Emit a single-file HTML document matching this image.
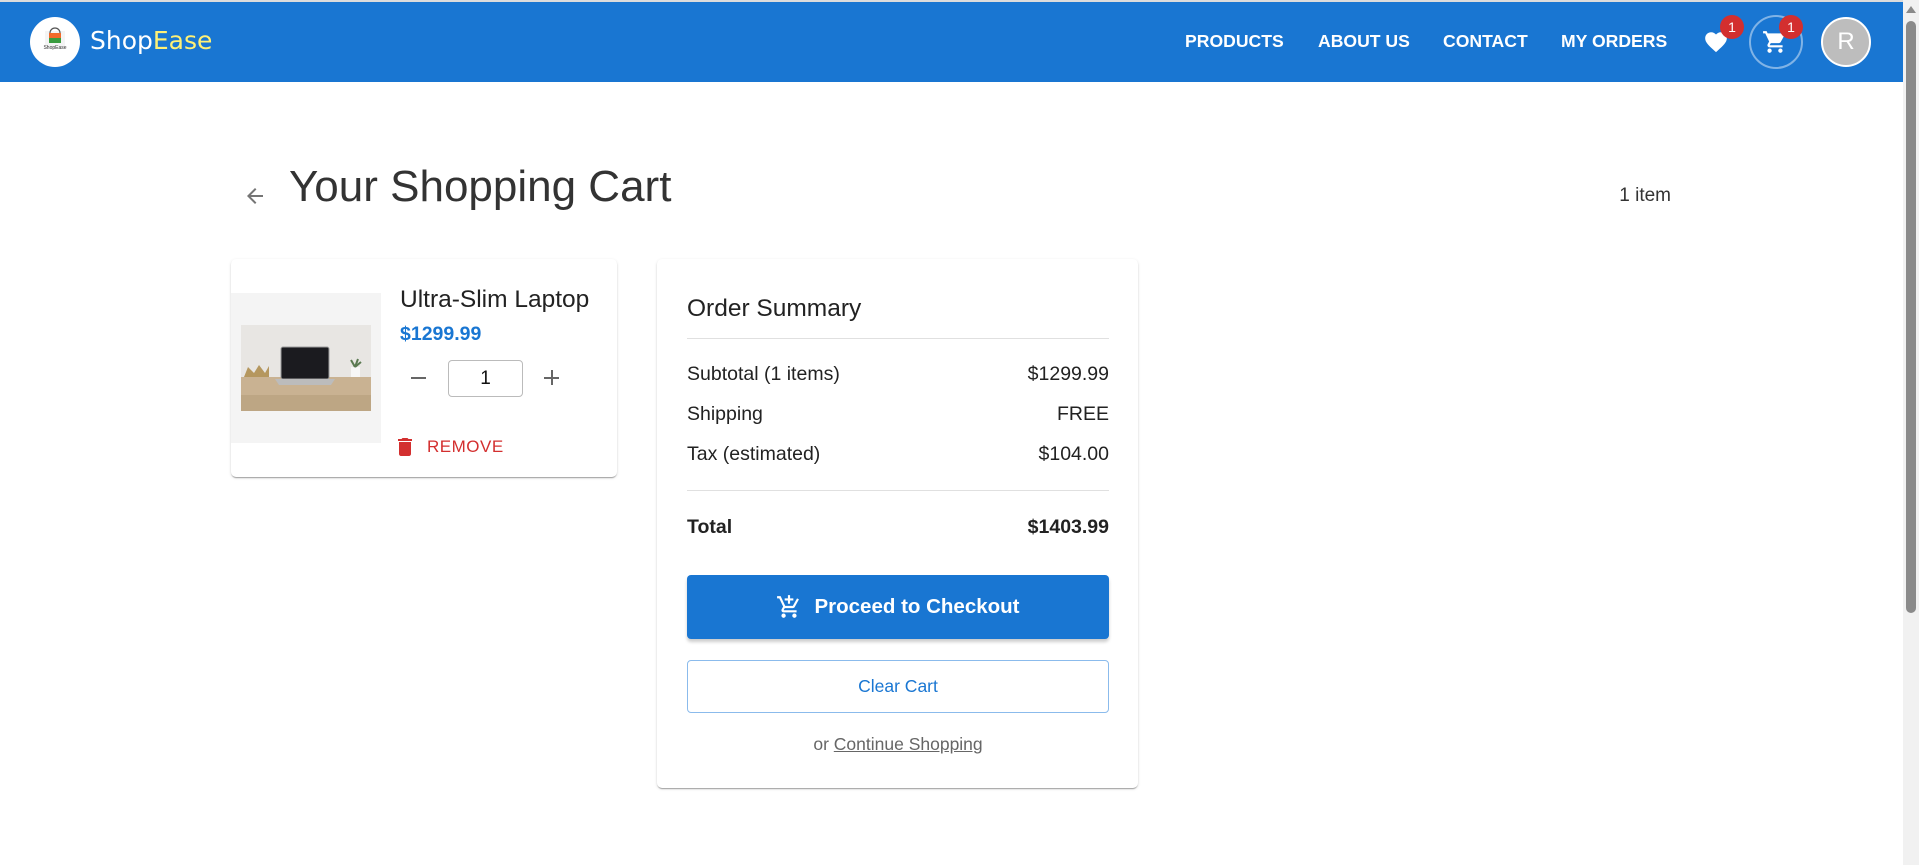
<!DOCTYPE html>
<html><head><meta charset="utf-8"><style>
*{box-sizing:border-box;margin:0;padding:0}
body{width:1919px;height:865px;overflow:hidden;background:#fff;font-family:"Liberation Sans",Arial,sans-serif;position:relative;color:#222}
.a{position:absolute}
.nav{left:0;top:2px;width:1903px;height:80px;background:#1976d2}
.top{left:0;top:0;width:1919px;height:2px;background:#dcdcdc}
.link{top:31px;color:#fff;font-weight:bold;font-size:17.6px;letter-spacing:0}
.badge{width:24px;height:24px;border-radius:50%;background:#d32f2f;color:#fff;font-size:14px;text-align:center;line-height:24px}
.card{background:#fff;border-radius:5px;box-shadow:0 2px 1px -1px rgba(0,0,0,.2),0 1px 1px rgba(0,0,0,.14),0 1px 3px rgba(0,0,0,.12)}
.row{left:687px;width:422px;font-size:19.5px;display:flex;justify-content:space-between}
</style></head><body>
<div class="a top"></div>
<div class="a nav"></div>
<div class="a" style="left:30px;top:17px;width:50px;height:50px;border-radius:50%;background:#fff"></div>
<svg class="a" style="left:41px;top:25px" width="28" height="30" viewBox="0 0 28 30"><rect x="4" y="6" width="20" height="18" fill="#f4f4f4"/><path d="M9 8a5 5 0 0 1 10 0" stroke="#555" fill="none" stroke-width="1.2"/><rect x="8" y="8" width="12" height="5" fill="#f26a2a"/><rect x="8" y="13" width="12" height="5" fill="#3a9c3f"/><text x="14" y="24" font-size="5" text-anchor="middle" fill="#333" font-family="Liberation Sans">ShopEase</text></svg>
<div class="a" style="left:90px;top:26px;font-family:'Comic Sans MS','DejaVu Sans',sans-serif;font-size:25px;color:#fff">Shop<span style="color:#fff176">Ease</span></div>
<div class="a link" style="left:1185px">PRODUCTS</div>
<div class="a link" style="left:1318px">ABOUT US</div>
<div class="a link" style="left:1443px">CONTACT</div>
<div class="a link" style="left:1561px">MY ORDERS</div>
<svg class="a" style="left:1703px;top:29px" width="26" height="26" viewBox="0 0 24 24"><path fill="#fff" d="M12 21.35l-1.45-1.32C5.4 15.36 2 12.28 2 8.5 2 5.42 4.42 3 7.5 3c1.74 0 3.41.81 4.5 2.09C13.09 3.81 14.76 3 16.5 3 19.58 3 22 5.42 22 8.5c0 3.78-3.4 6.86-8.55 11.54z"/></svg>
<div class="a badge" style="left:1720px;top:15px">1</div>
<div class="a" style="left:1749px;top:15px;width:54px;height:54px;border-radius:50%;border:2px solid rgba(255,255,255,.45)"></div>
<svg class="a" style="left:1762px;top:29px" width="26" height="26" viewBox="0 0 24 24"><path fill="#fff" d="M7 18c-1.1 0-2 .9-2 2s.9 2 2 2 2-.9 2-2-.9-2-2-2M1 2v2h2l3.6 7.59-1.35 2.45c-.16.28-.25.61-.25.96 0 1.1.9 2 2 2h12v-2H7.42c-.14 0-.25-.11-.25-.25l.03-.12.9-1.630h7.45c.75 0 1.41-.41 1.750-1.030l3.58-6.49A1 1 0 0 0 20 4H5.21l-.94-2zm16 16c-1.1 0-2 .9-2 2s.9 2 2 2 2-.9 2-2-.9-2-2-2"/></svg>
<div class="a badge" style="left:1779px;top:15px">1</div>
<div class="a" style="left:1821px;top:17px;width:50px;height:50px;border-radius:50%;background:#bdbdbd;border:2px solid #fff;color:#fff;font-size:24px;text-align:center;line-height:46px">R</div>
<div class="a" style="left:1903px;top:0;width:16px;height:865px;background:#f1f1f1"></div>
<div class="a" style="left:1906px;top:21px;width:10px;height:592px;background:#8a8a8a;border-radius:5px"></div>
<div class="a" style="left:1906px;top:6px;width:0;height:0;border-left:5px solid transparent;border-right:5px solid transparent;border-bottom:7px solid #8a8a8a"></div>

<svg class="a" style="left:243px;top:184px" width="24" height="24" viewBox="0 0 24 24"><path fill="#757575" d="M20 11H7.83l5.59-5.59L12 4l-8 8 8 8 1.41-1.41L7.83 13H20z"/></svg>
<div class="a" style="left:289px;top:162px;font-size:44px;color:#333">Your Shopping Cart</div>
<div class="a" style="left:1600px;top:185px;width:71px;text-align:right;font-size:19px;color:#333">1 item</div>

<div class="a card" style="left:231px;top:259px;width:386px;height:218px"></div>
<div class="a" style="left:231px;top:293px;width:150px;height:150px;background:#f4f4f4"></div>
<svg class="a" style="left:241px;top:325px" width="130" height="86" viewBox="0 0 130 86"><rect width="130" height="86" fill="#e8e6e3"/><rect y="52" width="130" height="34" fill="#c9b292"/><rect y="70" width="130" height="16" fill="#bda684"/><path d="M3 52l4-10 6 6 5-8 6 8 4-7v11z" fill="#b5975e"/><rect x="110" y="42" width="9" height="10" fill="#f7f7f7"/><path d="M114 42l-4-7M114 42l3-8M114 42l6-5" stroke="#5b7a52" stroke-width="2"/><rect x="40" y="22" width="48" height="32" rx="2" fill="#1b1b1f" stroke="#9c9c9c"/><path d="M34 54h60l-4 6H38z" fill="#bcbcbc"/></svg>
<div class="a" style="left:400px;top:286px;font-size:24.5px;color:#222">Ultra-Slim Laptop</div>
<div class="a" style="left:400px;top:323px;font-size:19.5px;font-weight:bold;color:#1976d2">$1299.99</div>
<div class="a" style="left:411px;top:377px;width:15px;height:2px;background:#666"></div>
<div class="a" style="left:448px;top:360px;width:75px;height:37px;border:1px solid #bbb;border-radius:4px;text-align:center;line-height:35px;font-size:19px;color:#111">1</div>
<div class="a" style="left:544px;top:377px;width:15px;height:2px;background:#666"></div>
<div class="a" style="left:551px;top:370px;width:2px;height:15px;background:#666"></div>
<svg class="a" style="left:393px;top:435px" width="24" height="24" viewBox="0 0 24 24"><path fill="#d32f2f" d="M6 19c0 1.1.9 2 2 2h8c1.1 0 2-.9 2-2V7H6zM19 4h-3.5l-1-1h-5l-1 1H5v2h14z"/></svg>
<div class="a" style="left:427px;top:437px;font-size:17px;color:#d32f2f;letter-spacing:.5px">REMOVE</div>

<div class="a card" style="left:657px;top:259px;width:481px;height:529px"></div>
<div class="a" style="left:687px;top:295px;font-size:24.5px;color:#222">Order Summary</div>
<div class="a" style="left:687px;top:338px;width:422px;height:1px;background:#e0e0e0"></div>
<div class="a row" style="top:363px"><span>Subtotal (1 items)</span><span>$1299.99</span></div>
<div class="a row" style="top:403px"><span>Shipping</span><span>FREE</span></div>
<div class="a row" style="top:443px"><span>Tax (estimated)</span><span>$104.00</span></div>
<div class="a" style="left:687px;top:490px;width:422px;height:1px;background:#e0e0e0"></div>
<div class="a row" style="top:516px;font-weight:bold"><span>Total</span><span>$1403.99</span></div>
<div class="a" style="left:687px;top:575px;width:422px;height:64px;background:#1976d2;border-radius:4px;box-shadow:0 3px 3px rgba(0,0,0,.2);color:#fff;font-weight:bold;font-size:20.5px;display:flex;align-items:center;justify-content:center;gap:12px"><svg width="26" height="26" viewBox="0 0 24 24"><path fill="#fff" d="M11 9h2V6h3V4h-3V1h-2v3H8v2h3zm-4 9c-1.1 0-2 .9-2 2s.9 2 2 2 2-.9 2-2-.9-2-2-2m10 0c-1.1 0-2 .9-2 2s.9 2 2 2 2-.9 2-2-.9-2-2-2M7.17 14.75l.03-.12.9-1.63h7.45c.75 0 1.41-.41 1.75-1.03l3.86-7.01L19.42 4l-3.87 7H8.53L4.27 2H1v2h2l3.6 7.59-1.35 2.45c-.16.28-.25.61-.25.96 0 1.1.9 2 2 2h12v-2H7.42c-.13 0-.25-.11-.25-.25"/></svg>Proceed to Checkout</div>
<div class="a" style="left:687px;top:660px;width:422px;height:53px;border:1px solid #8bbbec;border-radius:4px;color:#1976d2;font-size:17.5px;display:flex;align-items:center;justify-content:center">Clear Cart</div>
<div class="a" style="left:687px;top:734px;width:422px;text-align:center;font-size:17.5px;color:#666">or <span style="text-decoration:underline">Continue Shopping</span></div>
</body></html>
